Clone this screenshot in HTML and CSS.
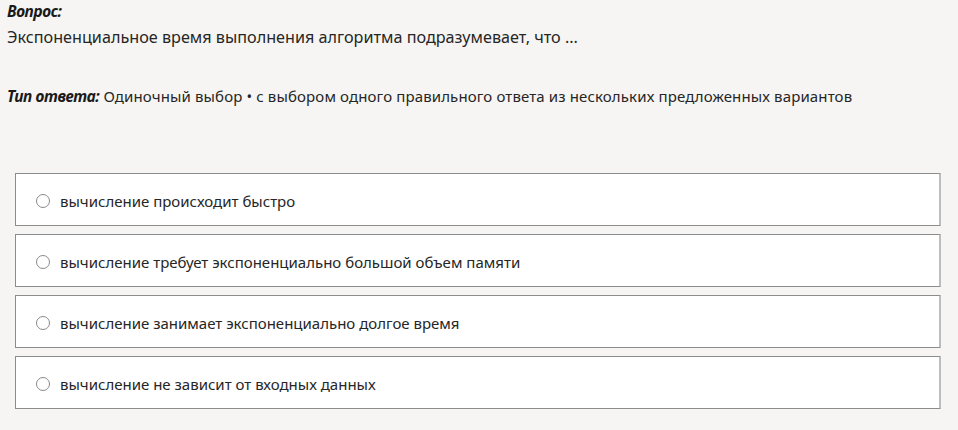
FILE: index.html
```html
<!DOCTYPE html>
<html lang="ru">
<head>
  <meta charset="UTF-8">
  <title>Вопрос</title>
  <link rel="stylesheet" href="styles.css">
</head>
<body>
  <div class="question">
    <div class="label">Вопрос:</div>
    <div class="text">Экспоненциальное время выполнения алгоритма подразумевает, что ...</div>
  </div>
  <div class="type">
    <span class="label">Тип ответа:</span> Одиночный выбор • с выбором одного правильного ответа из нескольких предложенных вариантов
  </div>
  <ul class="answers">
    <li class="answer"><span class="radio"></span>вычисление происходит быстро</li>
    <li class="answer"><span class="radio"></span>вычисление требует экспоненциально большой объем памяти</li>
    <li class="answer"><span class="radio"></span>вычисление занимает экспоненциально долгое время</li>
    <li class="answer"><span class="radio"></span>вычисление не зависит от входных данных</li>
  </ul>
</body>
</html>
```

FILE: styles.css
```css
* {
  margin: 0;
  padding: 0;
  box-sizing: border-box;
}

body {
  background-color: #f6f5f3;
  color: #262626;
  font-family: "Noto Sans", "Open Sans", sans-serif;
  font-size: 15px;
  padding: 1px 0 0 7px;
  width: 958px;
  height: 430px;
  overflow: hidden;
}

.label {
  font-weight: bold;
  font-style: italic;
  color: #1a1a1a;
  letter-spacing: -0.4px;
  font-size: 15.5px;
}

.question .label {
  line-height: 21px;
}

.question .text {
  font-size: 16.2px;
  line-height: 30px;
}

/*тип ответа*/
.type {
  margin-top: 30px;
  line-height: 28px;
  letter-spacing: 0.13px;
}

/*варианты ответа*/
.answers {
  list-style: none;
  margin: 63px 0 0 8px;
  width: 926px;
  display: flex;
  flex-direction: column;
  gap: 8px;
}

.answer {
  height: 53px;
  background-color: #fff;
  border: 1px solid #8c8c8c;
  border-right: 2px solid #bdbdbd;
  display: flex;
  align-items: center;
  padding: 3px 0 0 20px;
}

.radio {
  width: 14px;
  height: 14px;
  border: 1px solid #8a8a8a;
  border-radius: 50%;
  margin-right: 10px;
  flex-shrink: 0;
}
```
